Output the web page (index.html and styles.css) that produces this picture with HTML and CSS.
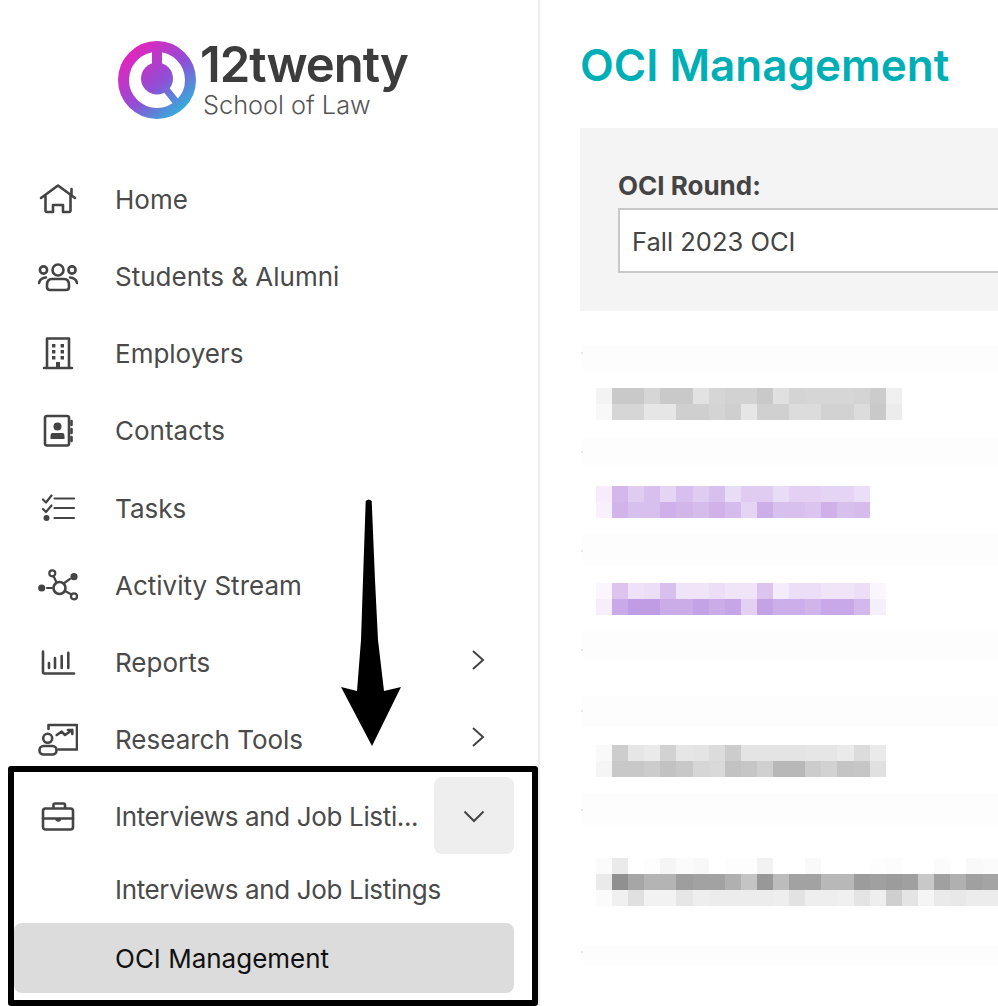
FILE: index.html
```html
<!DOCTYPE html>
<html lang="en">
<head>
    <meta charset="UTF-8">
    <meta name="viewport" content="width=device-width, initial-scale=1.0">
    <title>OCI Management</title>
    <link rel="stylesheet" href="styles.css">
</head>

<body>
    <div class="app">
        <aside class="sidebar">
            <div class="logo">
                <svg class="logo-mark" viewBox="0 0 80 80" width="80" height="80">
                    <defs>
                        <linearGradient id="logoGrad" gradientUnits="userSpaceOnUse" x1="8" y1="8" x2="68" y2="76">
                            <stop offset="0" stop-color="#ee1fb8"/>
                            <stop offset="0.55" stop-color="#8f4fd6"/>
                            <stop offset="1" stop-color="#22c0dc"/>
                        </linearGradient>
                    </defs>
                    <circle cx="40" cy="40" r="33.5" fill="none" stroke="url(#logoGrad)" stroke-width="11"/>
                    <rect x="35" y="4" width="10" height="24" fill="url(#logoGrad)"/>
                    <circle cx="40" cy="38.5" r="16" fill="url(#logoGrad)"/>
                    <path d="M48 48 L60 63" stroke="url(#logoGrad)" stroke-width="7"/>
                </svg>
                <div class="logo-text">
                    <div class="logo-name">12twenty</div>
                    <div class="logo-sub">School of Law</div>
                </div>
            </div>

            <nav class="nav">
                <a class="nav-item">
                    <svg class="nav-icon" viewBox="0 0 40 40"><path d="M3 19 L20 6.5 L37 19 M33.5 10 V16 M7.5 16 V31.5 Q7.5 33 9 33 H15 V26 H25 V33 H31 Q32.5 33 32.5 31.5 V16"/></svg>
                    <span class="nav-label">Home</span>
                </a>
                <a class="nav-item">
                    <svg class="nav-icon" viewBox="0 0 40 40"><circle cx="20" cy="13" r="5.5"/><circle cx="5.5" cy="13" r="3.6"/><circle cx="34" cy="13" r="3.6"/><path d="M14 22 H26 Q31 22 31 28 V30 Q31 33 28 33 H12 Q9 33 9 30 V28 Q9 22 14 22 Z"/><path d="M1 26 Q2 21 8 20.5 M39 26 Q38 21 32 20.5"/></svg>
                    <span class="nav-label">Students &amp; Alumni</span>
                </a>
                <a class="nav-item">
                    <svg class="nav-icon" viewBox="0 0 40 40"><path d="M9 34 V4.5 H31 V34 M6 34 H34"/><path class="dots" d="M14 10 h3.4 v3.4 h-3.4 z M22.6 10 h3.4 v3.4 h-3.4 z M14 16 h3.4 v3.4 h-3.4 z M22.6 16 h3.4 v3.4 h-3.4 z M14 22 h3.4 v3.4 h-3.4 z M22.6 22 h3.4 v3.4 h-3.4 z M18 28 h4 v6 h-4 z"/></svg>
                    <span class="nav-label">Employers</span>
                </a>
                <a class="nav-item">
                    <svg class="nav-icon" viewBox="0 0 40 40"><rect x="7" y="5" width="24" height="29.5" rx="2"/><path d="M33.5 10 v4 M33.5 18 v4 M33.5 26 v4"/><circle class="dots" cx="19.5" cy="15.5" r="4"/><path class="dots" d="M14.5 22 H24.5 Q26.5 22 26.5 25 V28 H12.5 V25 Q12.5 22 14.5 22 Z"/></svg>
                    <span class="nav-label">Contacts</span>
                </a>
                <a class="nav-item">
                    <svg class="nav-icon" viewBox="0 0 40 40"><path class="thin" d="M5 11.5 L8 14.5 L13.5 7.5 M5 21 L8 24 L13.5 17.5 M16.5 10.5 H36 M16.5 20 H36 M16.5 30 H36"/><circle class="dots" cx="8.5" cy="30" r="3"/></svg>
                    <span class="nav-label">Tasks</span>
                </a>
                <a class="nav-item">
                    <svg class="nav-icon" viewBox="0 0 40 40"><circle cx="21.5" cy="23" r="6"/><circle class="thin" cx="14.3" cy="8.3" r="3"/><circle class="thin" cx="36" cy="31.3" r="3"/><circle class="dots" cx="3.7" cy="23" r="3.6"/><circle class="dots" cx="36" cy="11.7" r="3.6"/><path class="thin" d="M9 23 H14 M15.5 11 L18.5 17.5 M27 17.5 L32 13.8 M27 26 L33.5 29.5"/></svg>
                    <span class="nav-label">Activity Stream</span>
                </a>
                <a class="nav-item has-sub">
                    <svg class="nav-icon" viewBox="0 0 40 40"><path d="M5 8.5 V29 Q5 30.5 6.5 30.5 H36 M11 20 V25 M17 15 V25 M23.7 13 V25 M30.3 9.7 V25"/></svg>
                    <span class="nav-label">Reports</span>
                    <svg class="chevron" viewBox="0 0 14 20"><path d="M2 1 L12 10 L2 19"/></svg>
                </a>
                <a class="nav-item has-sub">
                    <svg class="nav-icon" viewBox="0 0 40 40"><path d="M10.5 9 V5 H39 V29.5 H20.5"/><circle cx="9.7" cy="18.3" r="4.5"/><rect x="1.5" y="26" width="17" height="8.5" rx="4"/><path d="M18.7 15 L23.7 11.7 L27 15 L34.3 10 M30 10 H34.3 V14"/></svg>
                    <span class="nav-label">Research Tools</span>
                    <svg class="chevron" viewBox="0 0 14 20"><path d="M2 1 L12 10 L2 19"/></svg>
                </a>
                <a class="nav-item is-open">
                    <svg class="nav-icon" viewBox="0 0 40 40"><rect x="5" y="11.5" width="30" height="21" rx="2.5"/><path d="M15.5 11 V8 Q15.5 6.5 17 6.5 H25.5 Q27 6.5 27 8 V11 M5 21.5 H35"/><path class="dots" d="M17.5 21.5 H23 V23.5 Q20.3 26 17.5 23.5 Z"/></svg>
                    <span class="nav-label tight">Interviews and Job Listi...</span>
                    <span class="toggle">
                        <svg class="chevron-down" viewBox="0 0 22 13"><path d="M1.5 1.5 L11 11 L20.5 1.5"/></svg>
                    </span>
                </a>
                <a class="sub-item tight">Interviews and Job Listings</a>
                <a class="sub-item active">OCI Management</a>
            </nav>
        </aside>

        <main class="content">
            <h1>OCI Management</h1>

            <div class="filter-panel">
                <label for="round">OCI Round:</label>
                <div class="select-box" id="round">Fall 2023 OCI</div>
            </div>

            <div class="blur-list" id="blurList"></div>
        </main>
    </div>

    <!-- annotation drawn on top of the screenshot -->
    <svg class="arrow" viewBox="0 0 70 260" width="70" height="260">
        <path d="M29.7 3 Q32.7 0 35.7 3 L39 82 L42 142 L48 193 L65 189 L36 248 L5 189 L21 193 L25 142 L27 82 Z" fill="#000"/>
    </svg>
    <div class="highlight-box"></div>

    <script src="blur.js"></script>
</body>
</html>
```

FILE: styles.css
```css
/* General body styling */
html, body {
    height: 100%;
}

body {
    font-family: Inter, "Liberation Sans", sans-serif;
    margin: 0;
    padding: 0;
    background-color: #fff;
    color: #444;
    overflow: hidden;
}

.app {
    display: flex;
    height: 100vh;
}

/* Sidebar */
.sidebar {
    flex: 0 0 540px;
    min-width: 0;
    box-sizing: border-box;
    border-right: 2px solid #eee;
}

.logo {
    display: flex;
    align-items: flex-start;
    height: 160.8px;
    padding: 43px 0 0 117px;
    box-sizing: border-box;
}

.logo-mark {
    flex: none;
    margin-top: -3px;
}

.logo-text {
    margin-left: 3px;
}

.logo-name {
    font-size: 49px;
    font-weight: 600;
    line-height: 44px;
    color: #3c3c3c;
    letter-spacing: -1px;
}

.logo-sub {
    font-size: 25.3px;
    font-weight: 300;
    line-height: 30px;
    color: #555;
    margin: 3px 0 0 3px;
}

/* Nav list */
.nav {
    padding: 0 24px 0 14px;
}

.nav-item {
    display: flex;
    align-items: center;
    height: 77.2px;
    padding-left: 24px;
    font-size: 26px;
    color: #4a4a4a;
}

.nav-icon {
    flex: none;
    width: 40px;
    height: 40px;
    margin-right: 37px;
    fill: none;
    stroke: #444;
    stroke-width: 2.6;
    stroke-linecap: round;
    stroke-linejoin: round;
}

.nav-icon .dots {
    fill: #444;
    stroke: none;
}

.nav-icon .thin {
    stroke-width: 2.2;
}

.nav-label {
    flex: 1;
    min-width: 0;
    white-space: nowrap;
}

.chevron {
    flex: none;
    width: 14px;
    height: 20px;
    margin: -6px 29px 0 0;
    fill: none;
    stroke: #444;
    stroke-width: 2;
}

.toggle {
    flex: none;
    display: flex;
    align-items: center;
    justify-content: center;
    width: 80px;
    height: 77px;
    margin: -3px 0 0 15px;
    background-color: #eee;
    border-radius: 8px;
}

.chevron-down {
    width: 22px;
    height: 13px;
    margin-top: 3px;
    fill: none;
    stroke: #444;
    stroke-width: 2;
}

.sub-item {
    display: flex;
    align-items: center;
    height: 67.5px;
    padding-left: 101px;
    font-size: 26px;
    color: #4a4a4a;
}

.tight {
    letter-spacing: -0.35px;
}

.sub-item.active {
    height: 70px;
    box-sizing: border-box;
    padding-top: 2px;
    color: #111;
    background-color: #dcdcdc;
    border-radius: 8px;
}

/* Main content */
.content {
    flex: 1;
    min-width: 0;
    padding-left: 40px;
}

h1 {
    font-size: 44px;
    font-weight: 600;
    line-height: 52px;
    color: #00aeb5;
    margin: 39px 0 37px 0;
}

.filter-panel {
    height: 183px;
    box-sizing: border-box;
    padding: 42px 0 0 38px;
    background-color: #f4f4f4;
}

.filter-panel label {
    display: block;
    font-size: 26px;
    font-weight: 700;
    line-height: 32px;
    margin: 0 0 6px 0;
    color: #444;
}

.select-box {
    box-sizing: border-box;
    height: 65px;
    line-height: 63px;
    padding-left: 12px;
    font-size: 25.5px;
    background-color: #fff;
    border: 2px solid #c8c8c8;
    border-right: none;
}

/* Blurred rows */
.blur-list {
    margin-left: 2px;
}

.blur-faint {
    position: relative;
    background-color: #fdfdfd;
}

.blur-dot {
    position: absolute;
    left: -1px;
    width: 2px;
    height: 2px;
    background-color: #e8e8e8;
}

.blur-block {
    margin-left: 14px;
}

.blur-row {
    display: flex;
    height: 16px;
}

.blur-cell {
    flex: none;
    width: 16.1px;
    height: 16px;
}

/* Annotation */
.arrow {
    position: absolute;
    left: 336px;
    top: 498px;
}

.highlight-box {
    position: absolute;
    left: 8px;
    top: 766px;
    width: 530px;
    height: 240px;
    box-sizing: border-box;
    border: 6px solid #000;
    border-radius: 3px;
}
```

FILE: blur.js
```js
// blurred rows of the list, one entry per band of the page
// gap = space above it, faint = pale band height, dot = speck inside the band, rows = cell colours
var bands = [
    { gap: 34, faint: 27, dot: 7 },
    { gap: 16, rows: [
        "f3f3f3 c9c9c9 c9c9c9 d6d6d6 c9c9c9 c9c9c9 e2e2e2 d6d6d6 d2d2d2 d2d2d2 c9c9c9 e0e0e0 d4d4d4 d6d6d6 d6d6d6 d6d6d6 d4d4d4 cccccc f0f0f0",
        "f8f8f8 d6d6d6 d6d6d6 e6e6e6 e6e6e6 cfcfcf cfcfcf d4d4d4 cfcfcf e6e6e6 d0d0d0 d0d0d0 dcdcdc dcdcdc d2d2d2 d2d2d2 dcdcdc c9c9c9 ececec"
    ] },
    { gap: 17, faint: 28, dot: 14 },
    { gap: 21, rows: [
        "f6ecfb d4b8ec e0ccf0 d8c0ee e6d4f4 d8c0ee e0ccf0 d8c0ee e9dcf7 e0ccf0 e0ccf0 e9dcf7 e3d0f2 e3d0f2 e6d4f4 e6d4f4 eadef8",
        "f8f0fb d0b4ea d8c0ee d8c0ee d0b0ea d2b6ea d6bcec d0b2e9 d6bcec e6d4f4 ccaee8 d8c0ee d8c0ee dbc4ef cfb0e9 d8c0ee d6bcec"
    ] },
    { gap: 16, faint: 32, dot: 16 },
    { gap: 17, rows: [
        "fbf6fd dcc4ee efe2f8 ecdef7 d8c0ee efe4f8 efe4f8 ecdef7 efe4f8 efe4f8 dcc4ee f4ebfb ecdef7 ecdef7 efe4f8 efe4f8 ecdef7 fbf6fd",
        "f6eefb c9a9e8 c09ce4 c09ce4 cbace9 cbace9 c4a2e6 cbace9 c6a6e7 e3d0f2 c4a2e6 ccaeea ccaeea d0b4ea c8a8e8 c8a8e8 d2b8ec f5eefb"
    ] },
    { gap: 16, faint: 29, dot: 18 },
    { gap: 36, faint: 31, dot: 14 },
    { gap: 18, rows: [
        "f9f9f9 cdcdcd e6e6e6 eaeaea d2d2d2 e6e6e6 e4e4e4 dcdcdc cccccc e4e4e4 e4e4e4 e4e4e4 e4e4e4 e6e6e6 e6e6e6 eaeaea dcdcdc eaeaea",
        "f5f5f5 c8c8c8 c8c8c8 cccccc c2c2c2 c8c8c8 d6d6d6 d9d9d9 c2c2c2 c6c6c6 d0d0d0 b8b8b8 b8b8b8 cccccc d2d2d2 c4c4c4 c6c6c6 e0e0e0"
    ] },
    { gap: 16, faint: 32, dot: 16 },
    { gap: 33, rows: [
        "fbfbfb eaeaea ffffff fdfdfd f5f5f5 fbfbfb f8f8f8 ffffff fdfdfd fdfdfd f2f2f2 ffffff ffffff f9f9f9 ffffff ffffff ffffff fdfdfd fcfcfc ffffff ffffff fbfbfb ffffff f9f9f9 fbfbfb ffffff",
        "eaeaea 909090 a6a6a6 b4b4b4 b4b4b4 9e9e9e a2a2a2 a2a2a2 b0b0b0 c4c4c4 989898 bcbcbc a2a2a2 a2a2a2 b8b8b8 b8b8b8 9c9c9c a0a0a0 9c9c9c a0a0a0 c8c8c8 a0a0a0 b0b0b0 a0a0a0 a4a4a4 a4a4a4",
        "fbfbfb f0f0f0 e0e0e0 f2f2f2 f2f2f2 e6e6e6 eeeeee ececec ececec ececec ececec eeeeee e2e2e2 eeeeee eeeeee f0f0f0 e4e4e4 eeeeee cfcfcf e4e4e4 f5f5f5 eaeaea e8e8e8 ececec ececec ececec"
    ] },
    { gap: 39, faint: 20, dot: 6 }
];

var list = document.getElementById("blurList");

bands.forEach(function (band) {
    var el = document.createElement("div");
    el.style.marginTop = band.gap + "px";
    if (band.faint) {
        el.className = "blur-faint";
        el.style.height = band.faint + "px";
        var dot = document.createElement("span");
        dot.className = "blur-dot";
        dot.style.top = band.dot + "px";
        el.appendChild(dot);
    } else {
        el.className = "blur-block";
        band.rows.forEach(function (row) {
            var rowEl = document.createElement("div");
            rowEl.className = "blur-row";
            row.split(" ").forEach(function (hex) {
                var cell = document.createElement("span");
                cell.className = "blur-cell";
                cell.style.backgroundColor = "#" + hex;
                rowEl.appendChild(cell);
            });
            el.appendChild(rowEl);
        });
    }
    list.appendChild(el);
});
```
